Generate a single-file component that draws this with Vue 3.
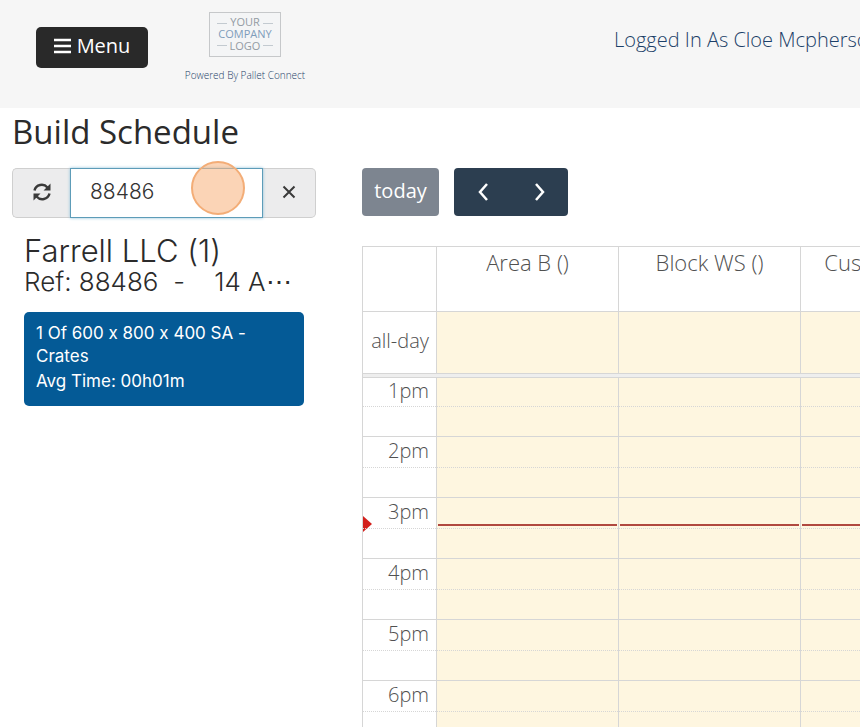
<script setup>
import { ref } from 'vue'

const search = ref('88486')
const areas = ['Area B ()', 'Block WS ()', 'Customer B ()']
const hours = ['1pm', '2pm', '3pm', '4pm', '5pm', '6pm']
const currentHour = '3pm'
</script>

<template>
  <div class="page">
    <header class="topbar">
      <button class="menu" type="button">
        <svg width="17" height="16" viewBox="0 0 17 16" aria-hidden="true">
          <path d="M0 2h17M0 8h17M0 14h17" stroke="#fff" stroke-width="2.500" />
        </svg>
        Menu
      </button>
      <a class="brand" href="#">
        <svg class="logo" width="74" height="48" viewBox="0 0 74 48" role="img" aria-label="Your company logo">
          <rect x="1.500" y="1.500" width="71" height="44" fill="#f4f5f6" stroke="#c6c8ca" />
          <path d="M9 12.500h10M55 12.500h10M9 34.500h10M55 34.500h10" stroke="#c3cad0" />
          <g text-anchor="middle" font-size="11" font-weight="400">
            <text x="37" y="15" fill="#939ba3">YOUR</text>
            <text x="37" y="27" fill="#7f9dbb">COMPANY</text>
            <text x="37" y="39" fill="#939ba3">LOGO</text>
          </g>
        </svg>
        <span>Powered By Pallet Connect</span>
      </a>
      <a class="user" href="#">Logged In As Cloe Mcpherson</a>
    </header>

    <main class="content">
      <h1>Build Schedule</h1>
      <div class="columns">
        <aside class="sidebar">
          <form class="search" @submit.prevent>
            <button type="button" aria-label="Refresh">
              <svg width="20" height="18" viewBox="0 0 20 18" fill="none" stroke="#3a3a3a" stroke-width="2.500" aria-hidden="true">
                <path d="M2.500 7.500C4 1.500 11.500 0 15.500 4.500M17.500 10.500C16 16.500 8.500 18 4.500 13.500" />
                <path d="M18.500 0.500v7h-7zM1.500 17.500v-7h7z" fill="#3a3a3a" stroke="none" />
              </svg>
            </button>
            <div class="field">
              <input v-model="search" type="text" aria-label="Search orders" />
              <span class="pointer"></span>
            </div>
            <button type="button" aria-label="Clear" @click="search = ''">
              <svg width="14" height="14" viewBox="0 0 14 14" stroke="#3a3a3a" stroke-width="2" aria-hidden="true">
                <path d="M1.500 1.500l11 11M12.500 1.500l-11 11" />
              </svg>
            </button>
          </form>

          <section class="order">
            <h2>Farrell LLC (1)</h2>
            <p class="ref">Ref: 88486&nbsp; - &nbsp;&nbsp; 14 A⋯</p>
            <article class="job">
              <p>1 Of 600 x 800 x 400 SA - Crates</p>
              <p>Avg Time: 00h01m</p>
            </article>
          </section>
        </aside>

        <section class="calendar">
          <div class="toolbar">
            <button class="today" type="button">today</button>
            <div class="nav">
              <button type="button" aria-label="Previous">
                <svg width="12" height="20" viewBox="0 0 12 20" fill="none" stroke="#fff" stroke-width="2.500" aria-hidden="true"><path d="M10 2L3 10l7 8" /></svg>
              </button>
              <button type="button" aria-label="Next">
                <svg width="12" height="20" viewBox="0 0 12 20" fill="none" stroke="#fff" stroke-width="2.500" aria-hidden="true"><path d="M2 2l7 8-7 8" /></svg>
              </button>
            </div>
          </div>
          <table>
            <colgroup>
              <col class="axis-col" />
              <col v-for="a in areas" :key="a" class="area-col" />
            </colgroup>
            <thead>
              <tr class="heads">
                <td></td>
                <th v-for="a in areas" :key="a" scope="col">{{ a }}</th>
              </tr>
            </thead>
            <tbody>
              <tr class="allday">
                <th scope="row">all-day</th>
                <td v-for="a in areas" :key="a"></td>
              </tr>
              <tr class="divider">
                <td :colspan="areas.length + 1"></td>
              </tr>
            </tbody>
            <tbody v-for="h in hours" :key="h" class="hour">
              <tr class="major">
                <th scope="row">{{ h }}<span v-if="h === currentHour" class="now-arrow"></span></th>
                <td v-for="a in areas" :key="a"><span v-if="h === currentHour" class="now-line"></span></td>
              </tr>
              <tr class="minor">
                <th></th>
                <td v-for="a in areas" :key="a"></td>
              </tr>
            </tbody>
          </table>
        </section>
      </div>
    </main>
  </div>
</template>

<style>
body {
  margin: 0;
  background: #fff;
  overflow: hidden;
}
</style>

<style scoped>
* {
  box-sizing: border-box;
}
.page {
  overflow: hidden;
  font-family: "Open Sans", "Noto Sans", sans-serif;
  font-size: 20px;
  font-weight: 300;
  color: #2b2b2b;
}
h1, h2, p {
  margin: 0;
}
button, input {
  font: inherit;
  padding: 0;
  margin: 0;
  border: 0;
}
button {
  display: flex;
  align-items: center;
  justify-content: center;
}
a {
  color: #1c3f68;
  text-decoration: none;
}
.topbar {
  display: flex;
  align-items: flex-start;
  height: 108px;
  padding: 0 0 0 36px;
  background: #f6f6f6;
}
.topbar > * {
  flex: none;
}
.menu {
  gap: 6px;
  width: 112px;
  height: 41px;
  margin-top: 27px;
  padding-bottom: 4px;
  border-radius: 5px;
  background: #292929;
  color: #fff;
  font-weight: 400;
}
.brand {
  display: flex;
  flex-direction: column;
  align-items: center;
  gap: 9px;
  width: 122px;
  margin: 11px 0 0 36px;
  font-size: 10px;
  line-height: 14px;
  white-space: nowrap;
}
.logo {
  display: block;
}
.user {
  margin: 26px 0 0 308px;
  line-height: 28px;
  white-space: nowrap;
}
.content {
  padding: 2px 0 0 12px;
}
h1 {
  font-weight: 400;
  font-size: 33px;
  line-height: 44px;
  margin-bottom: 14px;
}
.columns {
  display: grid;
  grid-template-columns: 304px minmax(0, 1fr);
  gap: 46px;
}
.sidebar {
  font-family: Inter, sans-serif;
  font-weight: 300;
  font-variant-ligatures: no-contextual;
}
.search {
  display: grid;
  grid-template-columns: 58px 1fr 53px;
  height: 50px;
}
.search button {
  padding-bottom: 3px;
  background: #ececed;
  border: 1px solid #cfcfcf;
}
.search button:first-child {
  border-radius: 5px 0 0 5px;
  border-right: 0;
}
.search button:last-child {
  border-radius: 0 5px 5px 0;
  border-left: 0;
}
.field {
  position: relative;
}
.field input {
  width: 100%;
  height: 100%;
  padding: 0 19px 4px;
  border: 1px solid #5d9cb8;
  box-shadow: 0 0 3px #8fc0d8;
  background: #fff;
  color: #333;
  font-size: 21px;
  outline: 0;
}
.pointer {
  position: absolute;
  right: 18px;
  top: -7px;
  width: 54px;
  height: 54px;
  border: 2px solid #f3ad77;
  border-radius: 50%;
  background: rgba(248, 183, 134, 0.6);
}
.order {
  padding: 16px 12px;
}
h2 {
  font-size: 31px;
  font-weight: 300;
  line-height: 34px;
}
.ref {
  font-size: 26px;
  line-height: 28px;
  white-space: nowrap;
}
.job {
  margin-top: 16px;
  min-height: 94px;
  padding: 10px 20px 12px 12px;
  border-radius: 5px;
  background: #045a96;
  color: #fff;
  font-size: 17px;
  font-weight: 400;
  line-height: 23px;
}
.job p + p {
  margin-top: 2px;
}
.toolbar {
  display: flex;
  gap: 15px;
  height: 48px;
  margin-bottom: 30px;
}
.today {
  width: 77px;
  padding-bottom: 4px;
  border-radius: 4px;
  background: #7d8590;
  color: #fff;
  font-weight: 400;
}
.nav {
  display: flex;
  width: 114px;
  border-radius: 4px;
  background: #2c3e50;
}
.nav button {
  flex: 1;
  background: none;
}
table {
  width: 620px;
  table-layout: fixed;
  border-collapse: separate;
  border-spacing: 0;
  color: #505050;
}
.axis-col {
  width: 74px;
}
.area-col {
  width: 182px;
}
th, td {
  padding: 0;
  border: 0 solid #d6d6d6;
  border-top-width: 1px;
  border-left-width: 1px;
  font-weight: 300;
  vertical-align: top;
}
tbody td {
  background: #fef6e0;
}
tbody th {
  position: relative;
  padding-right: 7px;
  text-align: right;
  line-height: 28px;
}
.heads {
  height: 65px;
}
.heads th {
  font-size: 22px;
  line-height: 30px;
}
.allday {
  height: 62px;
}
.allday th {
  padding-bottom: 4px;
  vertical-align: middle;
}
.divider td {
  height: 5px;
  border-bottom-width: 1px;
  background: #eee;
}
.major {
  height: 31px;
}
.minor {
  height: 30px;
}
.minor th, .minor td {
  border-top-style: dotted;
}
.hour:nth-of-type(2) .major {
  height: 28px;
}
.hour:nth-of-type(2) .major > * {
  border-top-width: 0;
}
.hour:nth-of-type(2) th {
  line-height: 25px;
}
.major td {
  position: relative;
}
.now-line {
  position: absolute;
  top: 26px;
  left: 1px;
  right: 1px;
  height: 2px;
  background: #b0483f;
}
.now-arrow {
  position: absolute;
  top: 18px;
  left: 0;
  border: 8px solid transparent;
  border-left: 9px solid #d3201c;
  border-right: 0;
}
</style>
